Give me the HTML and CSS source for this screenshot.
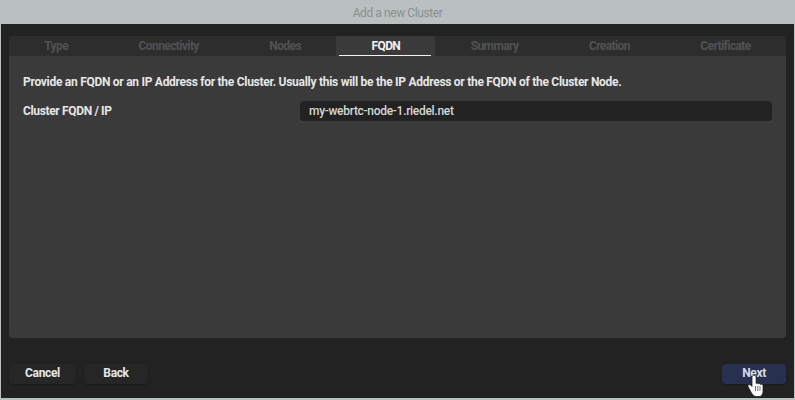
FILE: index.html
```html
<!DOCTYPE html>
<html lang="en">
<head>
  <meta charset="UTF-8">
  <title>Add a new Cluster</title>
  <link rel="stylesheet" href="styles.css">
</head>
<body>
  <div class="dialog">
    <div class="title">Add a new Cluster</div>
    <div class="body">
      <div class="tabs">
        <div class="tab">Type</div>
        <div class="tab">Connectivity</div>
        <div class="tab">Nodes</div>
        <div class="tab active">FQDN</div>
        <div class="tab">Summary</div>
        <div class="tab">Creation</div>
        <div class="tab">Certificate</div>
      </div>
      <div class="panel">
        <p class="hint">Provide an FQDN or an IP Address for the Cluster. Usually this will be the IP Address or the FQDN of the Cluster Node.</p>
        <div class="row">
          <label class="row-label" for="fqdn">Cluster FQDN / IP</label>
          <input class="field" id="fqdn" type="text" value="my-webrtc-node-1.riedel.net">
        </div>
      </div>
      <div class="footer">
        <button class="btn btn-cancel">Cancel</button>
        <button class="btn btn-back">Back</button>
        <button class="btn btn-next">Next</button>
      </div>
    </div>
  </div>
  <svg class="cursor" width="17" height="23" viewBox="0 0 17 23">
    <path d="M6.500.5c-.9 0-1.500.7-1.500 1.600v9.400l-1.300-1.400c-.7-.7-1.700-.8-2.300-.2-.6.5-.6 1.300-.2 2l3 5.500c1.200 2.200 2.700 4.100 5.300 4.100h2.200c2.900 0 4.300-2.300 4.300-5.300v-5.400c0-.9-.6-1.500-1.300-1.500-.4 0-.7.1-.9.4-.2-.7-.7-1.100-1.400-1.100-.4 0-.8.2-1 .4-.2-.5-.7-.9-1.300-.9-.4 0-.7.100-1 .4V2.100c0-.9-.7-1.600-1.600-1.600z" fill="#fff" stroke="#1a1a1a" stroke-width=".8"/>
    <path d="M8.500 11v5M10.800 11v5M13 11v5" stroke="#555" stroke-width=".8" fill="none"/>
  </svg>
</body>
</html>
```
FILE: styles.css
```css
html, body { margin: 0; padding: 0; background: #b9c0bf; }
body { width: 795px; height: 400px; overflow: hidden; position: relative; font-family: Roboto, sans-serif; }
.dialog { display: flex; flex-direction: column; height: 398px; }
.title { height: 24px; line-height: 27px; text-align: center; font-size: 12px; letter-spacing: -.42px; color: #8b8f8f; }
.body { flex: 1; margin: 0 1px; background: #222; padding: 12px 8px 14px; display: flex; flex-direction: column; }
.tabs { display: flex; height: 20px; background: #2d2d2d; border-radius: 3px 3px 0 0; }
.tab { flex: 1 1 auto; text-align: center; font-size: 12px; letter-spacing: -.6px; font-weight: 700; line-height: 20px; color: #525252; }
.tab.active { color: #f2f2f2; background: #3a3a3a; position: relative; }
.tab.active::after { content: ""; position: absolute; left: 3px; right: 4px; bottom: 0; height: 1px; background: #f2f2f2; }
.panel { height: 282px; box-sizing: border-box; background: #3a3a3a; padding: 19px 14px 0; border-radius: 0 0 3px 3px; }
.hint { margin: 0 0 12px; font-size: 12px; letter-spacing: -.28px; font-weight: 700; line-height: 14px; color: #e6e6e6; }
.row { display: flex; align-items: center; }
.row-label { width: 277px; font-size: 12px; letter-spacing: -.35px; font-weight: 700; color: #e6e6e6; }
.field { width: 472px; height: 20px; box-sizing: border-box; border: 0; border-radius: 4px; background: #222; padding: 0 9px; font: 500 12px Roboto, sans-serif; letter-spacing: -.3px; color: #d6d6d6; outline: 0; }
.footer { display: flex; gap: 8px; margin-top: 26px; }
.btn { height: 20px; border: 0; border-radius: 4px; background: #262626; padding: 0 0 2px; font: 700 12px Roboto, sans-serif; letter-spacing: -.35px; color: #e6e6e6; box-shadow: 0 1px 2px rgba(0,0,0,.3); }
.btn-cancel { width: 67px; }
.btn-back { width: 64px; }
.btn-next { width: 64px; margin-left: auto; background: #28304f; color: #d8dbe4; }
.cursor { position: absolute; left: 747px; top: 375px; }
```
